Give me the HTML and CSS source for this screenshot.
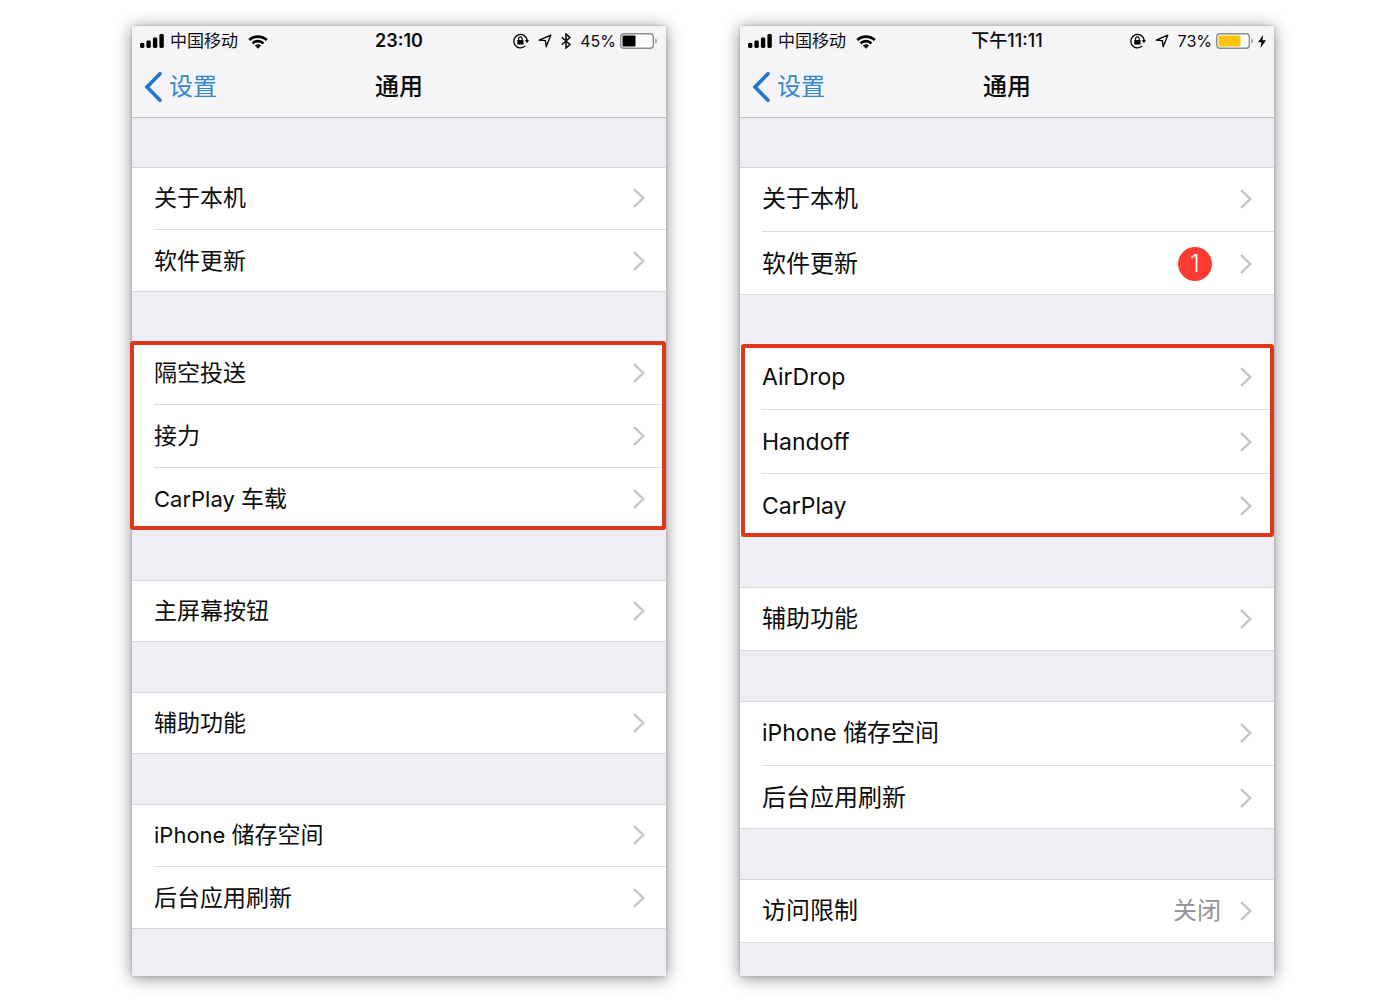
FILE: index.html
```html
<!DOCTYPE html>
<html lang="zh-CN">
<head>
<meta charset="utf-8">
<meta name="viewport" content="width=device-width, initial-scale=1">
<title>通用</title>
<link rel="stylesheet" href="styles.css">
</head>
<body>
<svg class="sprite" aria-hidden="true">
  <symbol id="signal" viewBox="0 0 24 14">
    <rect x="0" y="9" width="4.4" height="5" rx="1.4"/><rect x="6.4" y="6.5" width="4.4" height="7.5" rx="1.4"/><rect x="12.9" y="3.5" width="4.4" height="10.5" rx="1.4"/><rect x="19.4" y="0" width="4.4" height="14" rx="1.4"/>
  </symbol>
  <symbol id="wifi" viewBox="0 0 20 15">
    <path d="M0.3 5.1a14 14 0 0 1 19.4 0l-1.9 1.9a11.3 11.3 0 0 0-15.6 0zM3.6 8.4a9.3 9.3 0 0 1 12.8 0l-1.9 1.9a6.6 6.6 0 0 0-9 0zM6.9 11.6a4.6 4.6 0 0 1 6.2 0L10 14.7z"/>
  </symbol>
  <symbol id="lock" viewBox="0 0 16 16">
    <path d="M12.3 12.9A6.7 6.7 0 1 1 14.2 7.2" fill="none" stroke="#000" stroke-width="1.3"/>
    <path d="M11.9 7h4.1l-2.1 3.2z"/>
    <rect x="4.3" y="7" width="6.2" height="4.6" rx=".5"/>
    <path d="M5.6 7.3V5.7a1.8 1.8 0 0 1 3.6 0v1.6" fill="none" stroke="#000" stroke-width="1.1"/>
  </symbol>
  <symbol id="location" viewBox="0 0 14 14">
    <path d="M1.2 6.2L12.8 1.2L8.2 12.8L7.4 6.6z" fill="none" stroke="#000" stroke-width="1.3" stroke-linejoin="round"/>
  </symbol>
  <symbol id="bluetooth" viewBox="0 0 10 16">
    <path d="M.8 4.3L9 11.5L5 15V1l4 3.5L.8 11.7" fill="none" stroke="#000" stroke-width="1.5"/>
  </symbol>
  <symbol id="bolt" viewBox="0 0 8 13">
    <path d="M5.2 0L0 7.2h3.4L2.5 13L8 5.3H4.5z"/>
  </symbol>
  <symbol id="back" viewBox="0 0 18 30">
    <path d="M16 1.8L3 15l13 13.2" fill="none" stroke="#2472cf" stroke-width="3.6" stroke-linecap="round"/>
  </symbol>
  <symbol id="chevron" viewBox="0 0 12 20">
    <path d="M1 1.2L10.3 10L1 18.8" fill="none" stroke="#c4c4c8" stroke-width="2.4"/>
  </symbol>
</svg>

<main class="board">
  <section class="phone">
    <header class="top">
      <div class="status">
        <div class="status-start">
          <svg class="i-signal"><use href="#signal"/></svg>
          <span class="carrier">中国移动</span>
          <svg class="i-wifi"><use href="#wifi"/></svg>
        </div>
        <time class="clock">23:10</time>
        <div class="status-end">
          <svg class="i-lock"><use href="#lock"/></svg>
          <svg class="i-location"><use href="#location"/></svg>
          <svg class="i-bluetooth"><use href="#bluetooth"/></svg>
          <span class="percent">45%</span>
          <svg class="i-battery" viewBox="0 0 38 16"><rect x=".7" y=".7" width="32.6" height="14.6" rx="3" fill="#fbfbfc" stroke="#8d8d90" stroke-width="1.4"/><rect x="2.5" y="2.5" width="13" height="11" rx="1"/><path d="M35.3 5.5c2 .6 2 4.4 0 5z" fill="#8d8d90"/></svg>
        </div>
      </div>
      <nav class="bar">
        <a class="back" href="#"><svg class="i-back"><use href="#back"/></svg>设置</a>
        <h1 class="title">通用</h1>
      </nav>
    </header>
    <div class="groups">
      <ul class="group">
        <li><a class="row" href="#"><span class="label">关于本机</span><svg class="i-chevron"><use href="#chevron"/></svg></a></li>
        <li><a class="row" href="#"><span class="label">软件更新</span><svg class="i-chevron"><use href="#chevron"/></svg></a></li>
      </ul>
      <ul class="group marked">
        <li><a class="row" href="#"><span class="label">隔空投送</span><svg class="i-chevron"><use href="#chevron"/></svg></a></li>
        <li><a class="row" href="#"><span class="label">接力</span><svg class="i-chevron"><use href="#chevron"/></svg></a></li>
        <li><a class="row" href="#"><span class="label"><span class="latin">CarPlay </span>车载</span><svg class="i-chevron"><use href="#chevron"/></svg></a></li>
      </ul>
      <ul class="group">
        <li><a class="row" href="#"><span class="label">主屏幕按钮</span><svg class="i-chevron"><use href="#chevron"/></svg></a></li>
      </ul>
      <ul class="group">
        <li><a class="row" href="#"><span class="label">辅助功能</span><svg class="i-chevron"><use href="#chevron"/></svg></a></li>
      </ul>
      <ul class="group">
        <li><a class="row" href="#"><span class="label"><span class="latin">iPhone </span>储存空间</span><svg class="i-chevron"><use href="#chevron"/></svg></a></li>
        <li><a class="row" href="#"><span class="label">后台应用刷新</span><svg class="i-chevron"><use href="#chevron"/></svg></a></li>
      </ul>
    </div>
  </section>

  <section class="phone large">
    <header class="top">
      <div class="status">
        <div class="status-start">
          <svg class="i-signal"><use href="#signal"/></svg>
          <span class="carrier">中国移动</span>
          <svg class="i-wifi"><use href="#wifi"/></svg>
        </div>
        <time class="clock">下午11:11</time>
        <div class="status-end">
          <svg class="i-lock"><use href="#lock"/></svg>
          <svg class="i-location"><use href="#location"/></svg>
          <span class="percent">73%</span>
          <svg class="i-battery" viewBox="0 0 38 16"><rect x=".7" y=".7" width="32.6" height="14.6" rx="3" fill="#fbfbfc" stroke="#8d8d90" stroke-width="1.4"/><rect x="2.5" y="2.5" width="22" height="11" rx="1" fill="#fcc310"/><path d="M35.3 5.5c2 .6 2 4.4 0 5z" fill="#8d8d90"/></svg>
          <svg class="i-bolt"><use href="#bolt"/></svg>
        </div>
      </div>
      <nav class="bar">
        <a class="back" href="#"><svg class="i-back"><use href="#back"/></svg>设置</a>
        <h1 class="title">通用</h1>
      </nav>
    </header>
    <div class="groups">
      <ul class="group">
        <li><a class="row" href="#"><span class="label">关于本机</span><svg class="i-chevron"><use href="#chevron"/></svg></a></li>
        <li><a class="row" href="#"><span class="label">软件更新</span><span class="badge">1</span><svg class="i-chevron"><use href="#chevron"/></svg></a></li>
      </ul>
      <ul class="group marked">
        <li><a class="row" href="#"><span class="label"><span class="latin">AirDrop</span></span><svg class="i-chevron"><use href="#chevron"/></svg></a></li>
        <li><a class="row" href="#"><span class="label"><span class="latin">Handoff</span></span><svg class="i-chevron"><use href="#chevron"/></svg></a></li>
        <li><a class="row" href="#"><span class="label"><span class="latin">CarPlay</span></span><svg class="i-chevron"><use href="#chevron"/></svg></a></li>
      </ul>
      <ul class="group">
        <li><a class="row" href="#"><span class="label">辅助功能</span><svg class="i-chevron"><use href="#chevron"/></svg></a></li>
      </ul>
      <ul class="group">
        <li><a class="row" href="#"><span class="label"><span class="latin">iPhone </span>储存空间</span><svg class="i-chevron"><use href="#chevron"/></svg></a></li>
        <li><a class="row" href="#"><span class="label">后台应用刷新</span><svg class="i-chevron"><use href="#chevron"/></svg></a></li>
      </ul>
      <ul class="group">
        <li><a class="row" href="#"><span class="label">访问限制</span><span class="value">关闭</span><svg class="i-chevron"><use href="#chevron"/></svg></a></li>
      </ul>
    </div>
  </section>
</main>
</body>
</html>
```
FILE: styles.css
```css
* { box-sizing: border-box; }
body {
  margin: 0;
  background: #fff;
  color: #0c0c0c;
  font-family: Inter, "Noto Sans CJK SC", sans-serif;
}
a { color: inherit; text-decoration: none; }
svg { display: block; flex: none; }
.sprite { position: absolute; width: 0; height: 0; }

.board {
  display: grid;
  grid-template-columns: 1fr 1fr;
  gap: 74px;
  min-height: 100vh;
  padding: 26px 126px 24px 132px;
}
.phone {
  background: #efeef4;
  box-shadow: 0 2px 16px rgba(0, 0, 0, .45), 0 0 3px rgba(0, 0, 0, .2);
}

/* status bar and navigation */
.top { background: #f5f5f8; border-bottom: 1px solid #c2c2c6; }
.status {
  display: grid;
  grid-template-columns: 1fr auto 1fr;
  align-items: center;
  height: 30px;
  padding: 0 8px;
  font-size: 17px;
  line-height: 30px;
}
.status-start, .status-end { display: flex; align-items: center; }
.status-start { gap: 6px; }
.status-end { justify-content: flex-end; gap: 9px; }
.clock { font-size: 18px; font-weight: 600; }
.large .clock { font-weight: 500; }
.percent { font-size: 16px; }
.i-signal { width: 24px; height: 14px; }
.i-wifi { width: 20px; height: 15px; margin-left: 4px; }
.i-lock { width: 16px; height: 16px; }
.i-location { width: 14px; height: 14px; }
.i-bluetooth { width: 10px; height: 16px; }
.i-battery { width: 38px; height: 16px; margin-left: -5px; }
.i-bolt { width: 8px; height: 13px; margin-left: -5px; }

.bar {
  display: grid;
  grid-template-columns: 1fr auto 1fr;
  align-items: center;
  height: 61px;
  padding: 0 12px;
  line-height: 30px;
}
.back {
  display: flex;
  align-items: center;
  gap: 7px;
  color: #3285cf;
  font-size: 24px;
}
.i-back { width: 18px; height: 30px; }
.title { margin: 0; font-size: 24px; font-weight: 500; }

/* setting groups */
.groups { display: grid; gap: 50px; padding: 49px 0 33px; }
.group {
  position: relative;
  margin: 0;
  padding: 0;
  list-style: none;
  background: #fff;
  box-shadow: inset 0 1px #d9d9dd, inset 0 -1px #d9d9dd;
}
.group li { padding-left: 22px; }
.row {
  display: flex;
  align-items: center;
  height: 62px;
  padding-right: 21px;
  font-size: 23px;
  line-height: 30px;
}
.large .row { height: 64px; padding-right: 22px; font-size: 24px; }
.group li + li .row { border-top: 1px solid #dcdcdf; height: 63px; }
.large .group li + li .row { height: 64px; }
.label { flex: 1; }
.latin { font-size: 22px; }
.large .latin { font-size: 23px; }
.i-chevron { width: 12px; height: 20px; }
.value { margin-right: 19px; color: #929297; }
.badge {
  width: 34px;
  height: 34px;
  margin-right: 28px;
  border-radius: 50%;
  background: #f93b30;
  color: #fff;
  font-weight: 300;
  line-height: 34px;
  text-align: center;
}

/* red frame drawn over the compared group */
.marked::after {
  content: "";
  position: absolute;
  inset: -1px 0 0 -2px;
  border: 4px solid #dc3819;
  border-radius: 3px;
  pointer-events: none;
}
.large .marked::after { inset: -1px 0 0 1px; }
```
